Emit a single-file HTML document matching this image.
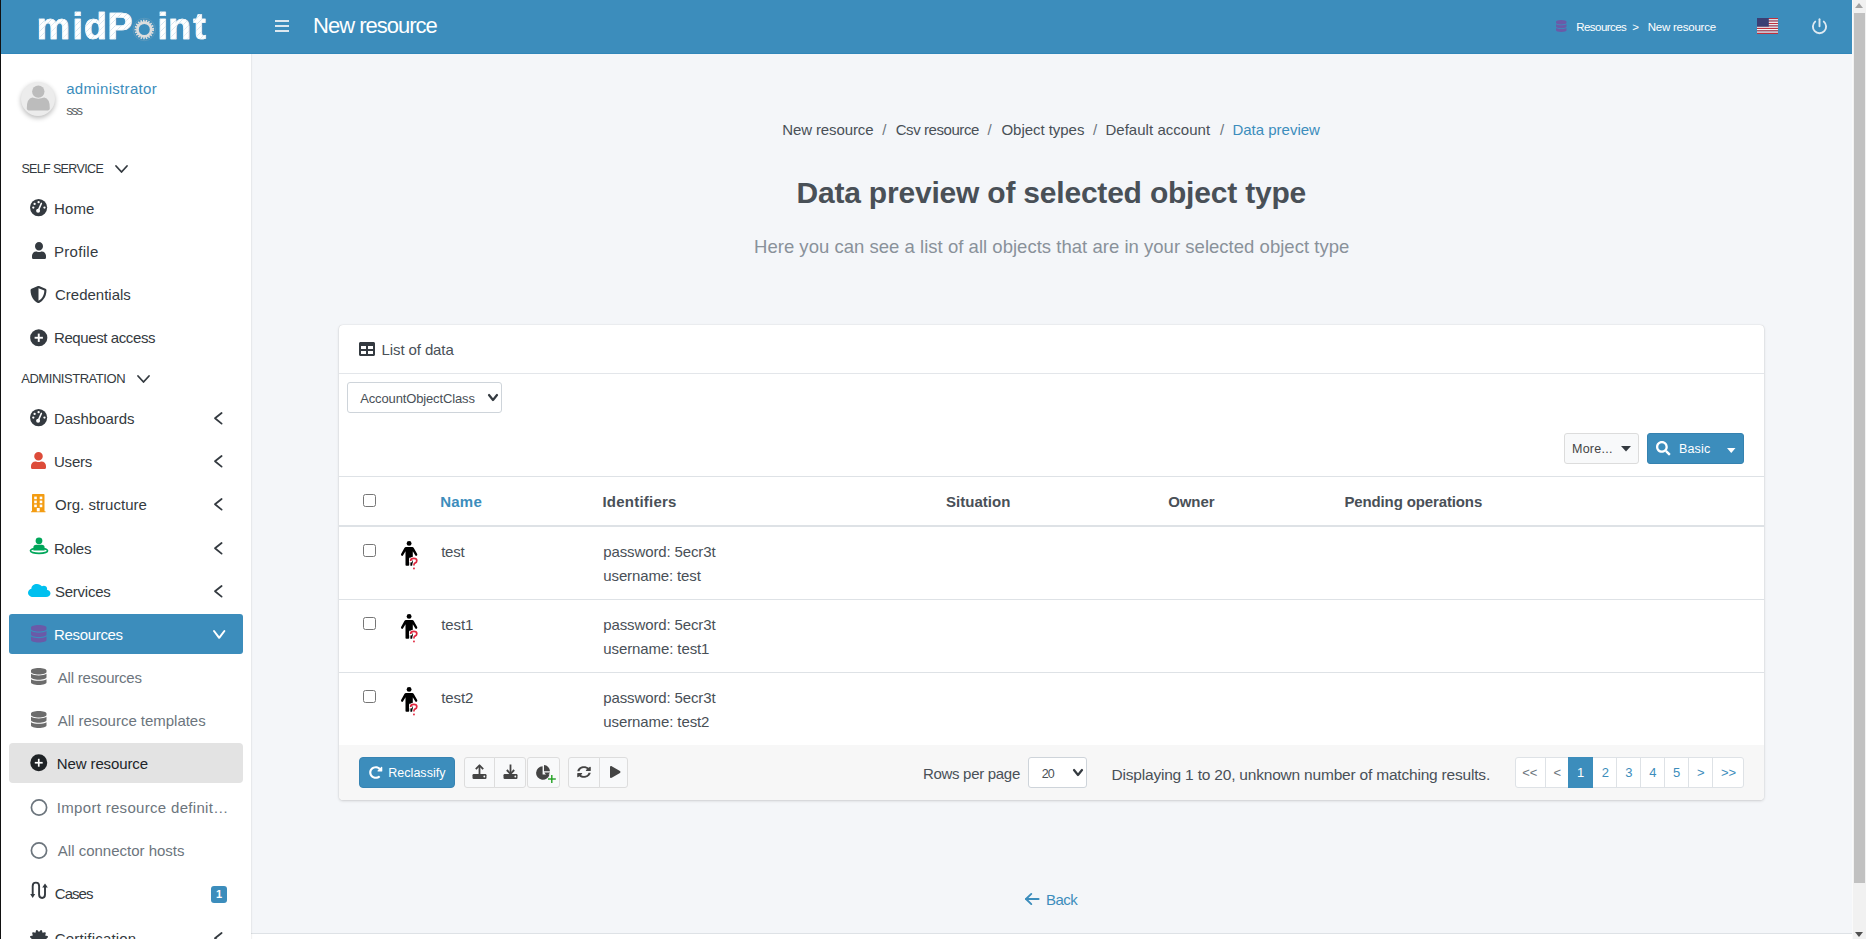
<!DOCTYPE html>
<html><head><meta charset="utf-8"><title>midPoint</title>
<style>
*{box-sizing:border-box;margin:0;padding:0}
html,body{width:1866px;height:939px;overflow:hidden}
body{position:relative;font-family:"Liberation Sans",sans-serif;background:#f4f6f9;color:#212529}
.b,.ic,.t{position:absolute}
.t{white-space:pre;line-height:normal}
.ic{display:block;overflow:visible}
</style></head><body>
<div class="b" style="left:251px;top:933px;width:1601px;height:1px;background:#dee2e6"></div>
<div class="b" style="left:251px;top:934px;width:1601px;height:5px;background:#fff"></div>
<div class="b" style="left:0px;top:54px;width:251px;height:885px;background:#fff;box-shadow:1px 0 1px rgba(0,0,0,.05)"></div>
<div class="b" style="left:0px;top:0px;width:1852px;height:54px;background:#3c8dbc;border-bottom:1px solid #3187ba"></div>
<div class="b" style="left:0px;top:0px;width:1px;height:939px;background:#111"></div>
<div class="b" style="left:275px;top:20px;width:14px;height:2px;background:#dce8f0"></div>
<div class="b" style="left:275px;top:25px;width:14px;height:2px;background:#dce8f0"></div>
<div class="b" style="left:275px;top:30px;width:14px;height:2px;background:#dce8f0"></div>
<svg class="ic" style="left:1556px;top:20px;width:10.5px;height:12px" viewBox="0 0 448 512" preserveAspectRatio="none"><path d="M448 73.143v45.714C448 159.143 347.667 192 224 192S0 159.143 0 118.857V73.143C0 32.857 100.333 0 224 0s224 32.857 224 73.143zM448 176v102.857C448 319.143 347.667 352 224 352S0 319.143 0 278.857V176c48.125 33.143 136.208 48.572 224 48.572S399.874 209.143 448 176zm0 160v102.857C448 479.143 347.667 512 224 512S0 479.143 0 438.857V336c48.125 33.143 136.208 48.572 224 48.572S399.874 369.143 448 336z" fill="#6a5aa8"/></svg>
<svg class="ic" style="left:1757px;top:18px;width:21px;height:16px" viewBox="0 0 21 16"><rect x="0" y="0.000" width="21" height="1.251" fill="#c0303c"/><rect x="0" y="1.231" width="21" height="1.251" fill="#ffffff"/><rect x="0" y="2.462" width="21" height="1.251" fill="#c0303c"/><rect x="0" y="3.692" width="21" height="1.251" fill="#ffffff"/><rect x="0" y="4.923" width="21" height="1.251" fill="#c0303c"/><rect x="0" y="6.154" width="21" height="1.251" fill="#ffffff"/><rect x="0" y="7.385" width="21" height="1.251" fill="#c0303c"/><rect x="0" y="8.615" width="21" height="1.251" fill="#ffffff"/><rect x="0" y="9.846" width="21" height="1.251" fill="#c0303c"/><rect x="0" y="11.077" width="21" height="1.251" fill="#ffffff"/><rect x="0" y="12.308" width="21" height="1.251" fill="#c0303c"/><rect x="0" y="13.538" width="21" height="1.251" fill="#ffffff"/><rect x="0" y="14.769" width="21" height="1.251" fill="#c0303c"/><rect x="0" y="0" width="11.8" height="8.6" fill="#3b3f74"/></svg>
<svg class="ic" style="left:1810px;top:17px;width:19px;height:19px" viewBox="0 0 19 19"><path d="M5.2 4.6 A6.6 6.6 0 1 0 13.8 4.6" fill="none" stroke="#dfeaf2" stroke-width="1.9" stroke-linecap="round"/><line x1="9.5" y1="2.2" x2="9.5" y2="9.2" stroke="#dfeaf2" stroke-width="1.9" stroke-linecap="round"/></svg>
<svg class="ic" style="left:132px;top:17px;width:25px;height:25px" viewBox="0 0 25 25"><circle cx="12.3" cy="12.5" r="11.2" fill="none" stroke="#8aa9bd" stroke-width="0.5" opacity="0.7"/><circle cx="12.3" cy="12.5" r="8.6" fill="none" stroke="#dcdcdc" stroke-width="2.4" stroke-dasharray="1.5 1.1"/><circle cx="12.3" cy="12.5" r="6.9" fill="none" stroke="#dddddd" stroke-width="2.8"/></svg>
<div class="b" style="left:21px;top:82px;width:34px;height:34px;border-radius:50%;background:#ececec;box-shadow:0 2px 5px rgba(0,0,0,.28)"></div>
<svg class="ic" style="left:21px;top:82px;width:34px;height:34px" viewBox="0 0 34 34"><circle cx="17.3" cy="9.6" r="6.2" fill="#bcbcbc"/><path d="M5.8 26.6 Q5.6 16.6 11.4 15.6 Q17.3 17.8 23.2 15.6 Q29 16.6 28.8 26.6 Q28.8 28.4 27 28.4 H7.6 Q5.8 28.4 5.8 26.6 Z" fill="#bcbcbc"/></svg>
<svg class="ic" style="left:114.5px;top:164.6px;width:13px;height:8px" viewBox="0 0 13 8"><polyline points="1,1 6.5,7 12,1" fill="none" stroke="#343a40" stroke-width="1.8" stroke-linecap="round" stroke-linejoin="round"/></svg>
<svg class="ic" style="left:136.5px;top:374.6px;width:13px;height:8px" viewBox="0 0 13 8"><polyline points="1,1 6.5,7 12,1" fill="none" stroke="#343a40" stroke-width="1.8" stroke-linecap="round" stroke-linejoin="round"/></svg>
<div class="b" style="left:9px;top:614px;width:234px;height:40px;background:#3c8dbc;border-radius:3px"></div>
<div class="b" style="left:9px;top:743px;width:234px;height:40px;background:#e3e3e3;border-radius:4px"></div>
<svg class="ic" style="left:29.9px;top:198.6px;width:17.2px;height:17.2px" viewBox="0 0 17.2 17.2"><circle cx="8.6" cy="8.6" r="8.6" fill="#343a40"/><circle cx="8.6" cy="3.1999999999999993" r="1.15" fill="#fff"/><circle cx="4.6" cy="4.8999999999999995" r="1.15" fill="#fff"/><circle cx="3.3" cy="8.6" r="1.15" fill="#fff"/><circle cx="14.5" cy="8.6" r="1.15" fill="#fff"/><line x1="8.2" y1="11.6" x2="11.4" y2="4.4" stroke="#fff" stroke-width="1.5" stroke-linecap="round"/><circle cx="8.1" cy="11.8" r="2" fill="#fff"/></svg>
<svg class="ic" style="left:32px;top:242px;width:14px;height:17px" viewBox="0 0 448 512" preserveAspectRatio="none"><path d="M224 256c70.7 0 128-57.3 128-128S294.7 0 224 0 96 57.3 96 128s57.3 128 128 128zm89.6 32h-16.7c-22.2 10.2-46.9 16-72.9 16s-50.6-5.8-72.9-16h-16.7C60.2 288 0 348.2 0 422.4V464c0 26.5 21.5 48 48 48h352c26.5 0 48-21.5 48-48v-41.6c0-74.2-60.2-134.4-134.4-134.4z" fill="#343a40"/></svg>
<svg class="ic" style="left:30px;top:286px;width:17px;height:17px" viewBox="0 0 512 512" preserveAspectRatio="none"><path d="M466.5 83.7l-192-80a48.15 48.15 0 0 0-36.9 0l-192 80C27.7 91.1 16 108.6 16 128c0 198.5 114.5 335.7 221.5 380.3 11.8 4.9 25.1 4.9 36.9 0C360.1 472.6 496 349.3 496 128c0-19.4-11.7-36.9-29.5-44.3zM256.1 446.3l-.1-381 175.9 73.3c-3.3 151.4-82.1 261.1-175.8 307.7z" fill="#343a40"/></svg>
<svg class="ic" style="left:30px;top:328.5px;width:17.5px;height:17.5px" viewBox="0 0 17.5 17.5"><circle cx="8.75" cy="8.75" r="8.6" fill="#343a40"/><line x1="8.75" y1="4.6" x2="8.75" y2="12.9" stroke="#fff" stroke-width="1.9"/><line x1="4.6" y1="8.75" x2="12.9" y2="8.75" stroke="#fff" stroke-width="1.9"/></svg>
<svg class="ic" style="left:29.9px;top:408.7px;width:17.2px;height:17.2px" viewBox="0 0 17.2 17.2"><circle cx="8.6" cy="8.6" r="8.6" fill="#343a40"/><circle cx="8.6" cy="3.1999999999999993" r="1.15" fill="#fff"/><circle cx="4.6" cy="4.8999999999999995" r="1.15" fill="#fff"/><circle cx="3.3" cy="8.6" r="1.15" fill="#fff"/><circle cx="14.5" cy="8.6" r="1.15" fill="#fff"/><line x1="8.2" y1="11.6" x2="11.4" y2="4.4" stroke="#fff" stroke-width="1.5" stroke-linecap="round"/><circle cx="8.1" cy="11.8" r="2" fill="#fff"/></svg>
<svg class="ic" style="left:31px;top:452px;width:15px;height:17px" viewBox="0 0 448 512" preserveAspectRatio="none"><path d="M224 256c70.7 0 128-57.3 128-128S294.7 0 224 0 96 57.3 96 128s57.3 128 128 128zm89.6 32h-16.7c-22.2 10.2-46.9 16-72.9 16s-50.6-5.8-72.9-16h-16.7C60.2 288 0 348.2 0 422.4V464c0 26.5 21.5 48 48 48h352c26.5 0 48-21.5 48-48v-41.6c0-74.2-60.2-134.4-134.4-134.4z" fill="#dd4b39"/></svg>
<svg class="ic" style="left:31px;top:494px;width:14.5px;height:18.2px" viewBox="0 0 14.5 18.2"><path d="M1 0.8 Q1 0 1.8 0 H12.7 Q13.5 0 13.5 0.8 V17.2 H14.5 V18.2 H0 V17.2 H1 Z" fill="#f39c12"/><rect x="3.2" y="2.6" width="2.6" height="2.6" fill="#fff"/><rect x="8.7" y="2.6" width="2.6" height="2.6" fill="#fff"/><rect x="3.2" y="6.6" width="2.6" height="2.6" fill="#fff"/><rect x="8.7" y="6.6" width="2.6" height="2.6" fill="#fff"/><rect x="3.2" y="10.6" width="2.6" height="2.6" fill="#fff"/><rect x="8.7" y="10.6" width="2.6" height="2.6" fill="#fff"/><rect x="5.8" y="14" width="2.9" height="3.4" fill="#fff"/></svg>
<svg class="ic" style="left:28.5px;top:536px;width:20px;height:19px" viewBox="0 0 20 19"><ellipse cx="10" cy="14.8" rx="8.6" ry="2.6" fill="none" stroke="#00a65a" stroke-width="1.6"/><circle cx="10" cy="4.8" r="3.4" fill="#00a65a"/><path d="M4.4 14.6 V11.6 Q4.4 8.8 7.2 8.8 H12.8 Q15.6 8.8 15.6 11.6 V14.6 Z" fill="#00a65a"/></svg>
<svg class="ic" style="left:27.5px;top:583px;width:22.5px;height:15px" viewBox="0 0 640 512" preserveAspectRatio="none"><path d="M537.6 226.6c4.1-10.7 6.4-22.4 6.4-34.6 0-53-43-96-96-96-19.7 0-38.1 6-53.3 16.2C367 64.2 315.3 32 256 32c-88.4 0-160 71.6-160 160 0 2.7.1 5.4.2 8.1C40.2 219.8 0 273.2 0 336c0 79.5 64.5 144 144 144h368c70.7 0 128-57.3 128-128 0-61.9-44-113.6-102.4-125.4z" fill="#00c0ef"/></svg>
<svg class="ic" style="left:31px;top:624.5px;width:15.5px;height:17.5px" viewBox="0 0 448 512" preserveAspectRatio="none"><path d="M448 73.143v45.714C448 159.143 347.667 192 224 192S0 159.143 0 118.857V73.143C0 32.857 100.333 0 224 0s224 32.857 224 73.143zM448 176v102.857C448 319.143 347.667 352 224 352S0 319.143 0 278.857V176c48.125 33.143 136.208 48.572 224 48.572S399.874 209.143 448 176zm0 160v102.857C448 479.143 347.667 512 224 512S0 479.143 0 438.857V336c48.125 33.143 136.208 48.572 224 48.572S399.874 369.143 448 336z" fill="#6a5aa8"/></svg>
<svg class="ic" style="left:31px;top:668px;width:15.5px;height:17px" viewBox="0 0 448 512" preserveAspectRatio="none"><path d="M448 73.143v45.714C448 159.143 347.667 192 224 192S0 159.143 0 118.857V73.143C0 32.857 100.333 0 224 0s224 32.857 224 73.143zM448 176v102.857C448 319.143 347.667 352 224 352S0 319.143 0 278.857V176c48.125 33.143 136.208 48.572 224 48.572S399.874 209.143 448 176zm0 160v102.857C448 479.143 347.667 512 224 512S0 479.143 0 438.857V336c48.125 33.143 136.208 48.572 224 48.572S399.874 369.143 448 336z" fill="#6c6c6c"/></svg>
<svg class="ic" style="left:31px;top:711px;width:15.5px;height:17px" viewBox="0 0 448 512" preserveAspectRatio="none"><path d="M448 73.143v45.714C448 159.143 347.667 192 224 192S0 159.143 0 118.857V73.143C0 32.857 100.333 0 224 0s224 32.857 224 73.143zM448 176v102.857C448 319.143 347.667 352 224 352S0 319.143 0 278.857V176c48.125 33.143 136.208 48.572 224 48.572S399.874 209.143 448 176zm0 160v102.857C448 479.143 347.667 512 224 512S0 479.143 0 438.857V336c48.125 33.143 136.208 48.572 224 48.572S399.874 369.143 448 336z" fill="#6c6c6c"/></svg>
<svg class="ic" style="left:30px;top:754.2px;width:17.5px;height:17.5px" viewBox="0 0 17.5 17.5"><circle cx="8.75" cy="8.75" r="8.5" fill="#1f2326"/><line x1="8.75" y1="4.8" x2="8.75" y2="12.7" stroke="#fff" stroke-width="1.7"/><line x1="4.8" y1="8.75" x2="12.7" y2="8.75" stroke="#fff" stroke-width="1.7"/></svg>
<svg class="ic" style="left:30px;top:798.5px;width:18px;height:17px" viewBox="0 0 18 17"><circle cx="9" cy="8.5" r="7.6" fill="none" stroke="#6c757d" stroke-width="1.7"/></svg>
<svg class="ic" style="left:30px;top:841.5px;width:18px;height:17px" viewBox="0 0 18 17"><circle cx="9" cy="8.5" r="7.6" fill="none" stroke="#6c757d" stroke-width="1.7"/></svg>
<svg class="ic" style="left:29px;top:881px;width:20px;height:19px" viewBox="0 0 20 19"><path d="M3.7 15 V5 Q3.7 1.6 6.9 1.6 Q10.1 1.6 10.1 5 V13.6 Q10.1 17 13.1 17 Q16 17 16 13.6 V5.5" fill="none" stroke="#343a40" stroke-width="1.9"/><path d="M1.2 13 L3.7 17 L6.2 13 Z" fill="#343a40"/><path d="M13.2 6.6 L16 2.4 L18.8 6.6 Z" fill="#343a40"/></svg>
<div class="b" style="left:211px;top:885.5px;width:16px;height:17px;background:#3c8dbc;border-radius:3px"></div>
<svg class="ic" style="left:30px;top:929.5px;width:18px;height:18px" viewBox="0 0 512 512" preserveAspectRatio="none"><path d="M458.622 255.92l45.985-45.005c13.708-12.977 7.316-36.039-10.664-40.339l-62.650-15.990 17.661-62.015c4.991-17.838-11.829-34.663-29.661-29.671l-61.994 17.667-15.984-62.671C337.085.197 313.765-6.276 300.895 7.298L256 53.823 211.105 7.298c-12.725-13.421-36.179-7.270-40.410 10.367l-15.984 62.671-61.994-17.667C74.870 57.680 58.056 74.501 63.046 92.340l17.661 62.015-62.650 15.990C.069 174.656-6.310 197.723 7.392 210.693l45.985 45.005-45.985 45.005c-13.708 12.977-7.316 36.039 10.664 40.339l62.650 15.990-17.661 62.015c-4.991 17.838 11.829 34.663 29.661 29.671l61.994-17.667 15.984 62.671c4.439 18.438 27.737 24.360 40.410 10.367L256 458.237l44.895 46.006c12.590 13.531 35.870 7.531 40.410-10.367l15.984-62.671 61.994 17.667c17.832 4.991 34.652-11.830 29.661-29.671l-17.661-62.015 62.650-15.990c17.980-4.300 24.376-27.363 10.664-40.339l-45.975-45.005z" fill="#343a40"/></svg>
<svg class="ic" style="left:214.2px;top:411.6px;width:8.6px;height:12.6px" viewBox="0 0 8.6 12.6"><polyline points="7.6,1 1,6.3 7.6,11.6" fill="none" stroke="#343a40" stroke-width="1.8" stroke-linecap="round" stroke-linejoin="round"/></svg>
<svg class="ic" style="left:214.2px;top:454.9px;width:8.6px;height:12.6px" viewBox="0 0 8.6 12.6"><polyline points="7.6,1 1,6.3 7.6,11.6" fill="none" stroke="#343a40" stroke-width="1.8" stroke-linecap="round" stroke-linejoin="round"/></svg>
<svg class="ic" style="left:214.2px;top:498.2px;width:8.6px;height:12.6px" viewBox="0 0 8.6 12.6"><polyline points="7.6,1 1,6.3 7.6,11.6" fill="none" stroke="#343a40" stroke-width="1.8" stroke-linecap="round" stroke-linejoin="round"/></svg>
<svg class="ic" style="left:214.2px;top:541.5px;width:8.6px;height:12.6px" viewBox="0 0 8.6 12.6"><polyline points="7.6,1 1,6.3 7.6,11.6" fill="none" stroke="#343a40" stroke-width="1.8" stroke-linecap="round" stroke-linejoin="round"/></svg>
<svg class="ic" style="left:214.2px;top:584.8px;width:8.6px;height:12.6px" viewBox="0 0 8.6 12.6"><polyline points="7.6,1 1,6.3 7.6,11.6" fill="none" stroke="#343a40" stroke-width="1.8" stroke-linecap="round" stroke-linejoin="round"/></svg>
<svg class="ic" style="left:214.2px;top:932px;width:8.6px;height:12.6px" viewBox="0 0 8.6 12.6"><polyline points="7.6,1 1,6.3 7.6,11.6" fill="none" stroke="#343a40" stroke-width="1.8" stroke-linecap="round" stroke-linejoin="round"/></svg>
<svg class="ic" style="left:212.8px;top:629.6px;width:12.4px;height:8.8px" viewBox="0 0 12.4 8.8"><polyline points="1,1 6.2,7.800000000000001 11.4,1" fill="none" stroke="#fff" stroke-width="2" stroke-linecap="round" stroke-linejoin="round"/></svg>
<div class="b" style="left:339px;top:325px;width:1425px;height:475px;background:#fff;border-radius:4px;box-shadow:0 0 1px rgba(0,0,0,.2),0 1px 3px rgba(0,0,0,.15)"></div>
<div class="b" style="left:339px;top:373px;width:1425px;height:1px;background:#e3e6ea"></div>
<svg class="ic" style="left:359px;top:342px;width:16px;height:14px" viewBox="0 32 512 448" preserveAspectRatio="none"><path d="M464 32H48C21.49 32 0 53.49 0 80v352c0 26.51 21.49 48 48 48h416c26.51 0 48-21.49 48-48V80c0-26.51-21.490-48-48-48zM224 416H64v-96h160v96zm0-160H64v-96h160v96zm224 160H288v-96h160v96zm0-160H288v-96h160v96z" fill="#343a40"/></svg>
<div class="b" style="left:347px;top:382px;width:155px;height:31px;border:1px solid #ced4da;border-radius:3px;background:#fff"></div>
<svg class="ic" style="left:488px;top:394px;width:10px;height:7px" viewBox="0 0 10 7"><polyline points="1,1 5.0,6 9,1" fill="none" stroke="#343a40" stroke-width="2.2" stroke-linecap="round" stroke-linejoin="round"/></svg>
<div class="b" style="left:1564px;top:433px;width:74.5px;height:30.5px;border:1px solid #dcdcdc;border-radius:3px;background:#f8f9fa"></div>
<svg class="ic" style="left:1620.5px;top:446px;width:10px;height:5.5px" viewBox="0 0 10 5.5"><path d="M0 0 H10 L5 5.5 Z" fill="#343a40"/></svg>
<div class="b" style="left:1647px;top:433px;width:96.5px;height:30.5px;background:#3c8dbc;border-radius:3px;border:1px solid #3582b0"></div>
<svg class="ic" style="left:1655.5px;top:441px;width:14.5px;height:14.5px" viewBox="0 0 512 512" preserveAspectRatio="none"><path d="M505 442.7L405.3 343c-4.5-4.5-10.600-7-17-7H372c27.6-35.3 44-79.7 44-128C416 93.1 322.9 0 208 0S0 93.1 0 208s93.1 208 208 208c48.3 0 92.7-16.4 128-44v16.3c0 6.4 2.5 12.5 7 17l99.7 99.7c9.4 9.4 24.6 9.4 33.9 0l28.3-28.3c9.4-9.4 9.4-24.6.1-34zM208 336c-70.7 0-128-57.2-128-128 0-70.7 57.2-128 128-128 70.7 0 128 57.2 128 128 0 70.7-57.2 128-128 128z" fill="#fff"/></svg>
<svg class="ic" style="left:1727px;top:447.5px;width:8.5px;height:5px" viewBox="0 0 8.5 5"><path d="M0 0 H8.5 L4.25 5 Z" fill="#fff"/></svg>
<div class="b" style="left:339px;top:476px;width:1425px;height:1px;background:#dee2e6"></div>
<div class="b" style="left:339px;top:525px;width:1425px;height:2px;background:#dee2e6"></div>
<div class="b" style="left:339px;top:599px;width:1425px;height:1px;background:#dee2e6"></div>
<div class="b" style="left:339px;top:672px;width:1425px;height:1px;background:#dee2e6"></div>
<div class="b" style="left:363px;top:494px;width:13px;height:13px;border:1px solid #767676;border-radius:2.5px;background:#fff"></div>
<div class="b" style="left:363px;top:544px;width:13px;height:13px;border:1px solid #767676;border-radius:2.5px;background:#fff"></div>
<div class="b" style="left:363px;top:617px;width:13px;height:13px;border:1px solid #767676;border-radius:2.5px;background:#fff"></div>
<div class="b" style="left:363px;top:690px;width:13px;height:13px;border:1px solid #767676;border-radius:2.5px;background:#fff"></div>
<svg class="ic" style="left:400.5px;top:541px;width:17px;height:29px" viewBox="0 0 17 29"><circle cx="8.1" cy="2.4" r="2.45" fill="#000"/><path d="M5 6.1 H11.2 Q12.2 6.1 12.8 7 L16.2 13 Q16.7 14.3 15.6 14.8 Q14.7 15.1 14.2 14.2 L11.8 10.2 V24 Q11.8 24.8 11 24.8 H9.4 V16.8 H8.2 V24.1 Q8.2 24.8 7.4 24.8 H5.3 Q4.5 24.8 4.5 24 V10.2 L2.1 14.2 Q1.6 15.1 0.7 14.8 Q-0.4 14.3 0.1 13 L3.4 7 Q4 6.1 5 6.1 Z" fill="#000"/><path d="M9.6 19.9 Q9.6 17.4 12.7 17.4 Q15.8 17.4 15.8 19.7 Q15.8 21.3 13.9 22.1 Q12.9 22.6 12.9 24.4" fill="none" stroke="#fff" stroke-width="3.4" stroke-linecap="round"/><path d="M9.6 19.9 Q9.6 17.4 12.7 17.4 Q15.8 17.4 15.8 19.7 Q15.8 21.3 13.9 22.1 Q12.9 22.6 12.9 24.4" fill="none" stroke="#e0283f" stroke-width="1.7"/><rect x="12.1" y="26.6" width="1.7" height="1.7" fill="#e0283f"/></svg>
<svg class="ic" style="left:400.5px;top:614px;width:17px;height:29px" viewBox="0 0 17 29"><circle cx="8.1" cy="2.4" r="2.45" fill="#000"/><path d="M5 6.1 H11.2 Q12.2 6.1 12.8 7 L16.2 13 Q16.7 14.3 15.6 14.8 Q14.7 15.1 14.2 14.2 L11.8 10.2 V24 Q11.8 24.8 11 24.8 H9.4 V16.8 H8.2 V24.1 Q8.2 24.8 7.4 24.8 H5.3 Q4.5 24.8 4.5 24 V10.2 L2.1 14.2 Q1.6 15.1 0.7 14.8 Q-0.4 14.3 0.1 13 L3.4 7 Q4 6.1 5 6.1 Z" fill="#000"/><path d="M9.6 19.9 Q9.6 17.4 12.7 17.4 Q15.8 17.4 15.8 19.7 Q15.8 21.3 13.9 22.1 Q12.9 22.6 12.9 24.4" fill="none" stroke="#fff" stroke-width="3.4" stroke-linecap="round"/><path d="M9.6 19.9 Q9.6 17.4 12.7 17.4 Q15.8 17.4 15.8 19.7 Q15.8 21.3 13.9 22.1 Q12.9 22.6 12.9 24.4" fill="none" stroke="#e0283f" stroke-width="1.7"/><rect x="12.1" y="26.6" width="1.7" height="1.7" fill="#e0283f"/></svg>
<svg class="ic" style="left:400.5px;top:687px;width:17px;height:29px" viewBox="0 0 17 29"><circle cx="8.1" cy="2.4" r="2.45" fill="#000"/><path d="M5 6.1 H11.2 Q12.2 6.1 12.8 7 L16.2 13 Q16.7 14.3 15.6 14.8 Q14.7 15.1 14.2 14.2 L11.8 10.2 V24 Q11.8 24.8 11 24.8 H9.4 V16.8 H8.2 V24.1 Q8.2 24.8 7.4 24.8 H5.3 Q4.5 24.8 4.5 24 V10.2 L2.1 14.2 Q1.6 15.1 0.7 14.8 Q-0.4 14.3 0.1 13 L3.4 7 Q4 6.1 5 6.1 Z" fill="#000"/><path d="M9.6 19.9 Q9.6 17.4 12.7 17.4 Q15.8 17.4 15.8 19.7 Q15.8 21.3 13.9 22.1 Q12.9 22.6 12.9 24.4" fill="none" stroke="#fff" stroke-width="3.4" stroke-linecap="round"/><path d="M9.6 19.9 Q9.6 17.4 12.7 17.4 Q15.8 17.4 15.8 19.7 Q15.8 21.3 13.9 22.1 Q12.9 22.6 12.9 24.4" fill="none" stroke="#e0283f" stroke-width="1.7"/><rect x="12.1" y="26.6" width="1.7" height="1.7" fill="#e0283f"/></svg>
<div class="b" style="left:339px;top:745px;width:1425px;height:55px;background:#f7f7f7;border-radius:0 0 4px 4px"></div>
<div class="b" style="left:359px;top:757px;width:96px;height:31px;background:#3c8dbc;border:1px solid #3784b3;border-radius:4px"></div>
<svg class="ic" style="left:368.5px;top:765.5px;width:13.5px;height:13px" viewBox="0 0 512 512" preserveAspectRatio="none"><path d="M256.455 8c66.269.119 126.437 26.233 170.859 68.685l35.715-35.715C478.149 25.851 504 36.559 504 57.941V192c0 13.255-10.745 24-24 24H345.941c-21.382 0-32.090-25.851-16.971-40.971l41.750-41.750c-30.864-28.899-70.801-44.907-113.230-45.273-92.398-.798-170.283 73.977-169.484 169.442C88.764 348.009 162.184 424 256 424c41.127 0 79.997-14.678 110.629-41.556 4.743-4.161 11.906-3.908 16.368.553l39.662 39.662c4.872 4.872 4.631 12.815-.482 17.433C378.202 479.813 319.926 504 256 504 119.034 504 8.001 392.967 8 256.002 7.999 119.193 119.646 7.755 256.455 8z" fill="#fff"/></svg>
<div class="b" style="left:463.5px;top:757px;width:31px;height:31px;background:#f8f9fa;border:1px solid #dddddd;border-radius:3px 0 0 3px"></div>
<div class="b" style="left:494px;top:757px;width:31.5px;height:31px;background:#f8f9fa;border:1px solid #dddddd;border-radius:0 3px 3px 0"></div>
<div class="b" style="left:526.5px;top:757px;width:33px;height:31px;background:#f8f9fa;border:1px solid #dddddd;border-radius:3px"></div>
<div class="b" style="left:568px;top:757px;width:31.5px;height:31px;background:#f8f9fa;border:1px solid #dddddd;border-radius:3px 0 0 3px"></div>
<div class="b" style="left:599px;top:757px;width:28.5px;height:31px;background:#f8f9fa;border:1px solid #dddddd;border-radius:0 3px 3px 0"></div>
<svg class="ic" style="left:471.5px;top:764px;width:15px;height:15px" viewBox="0 0 15 15"><rect x="0.5" y="10" width="14" height="5" rx="1.2" fill="#444"/><circle cx="12.3" cy="12.5" r="0.9" fill="#f8f9fa"/><line x1="7.5" y1="1.6" x2="7.5" y2="11" stroke="#444" stroke-width="1.8"/><polyline points="3.8,5.2 7.5,1.3 11.2,5.2" fill="none" stroke="#444" stroke-width="1.8" stroke-linejoin="round"/></svg>
<svg class="ic" style="left:502.5px;top:764px;width:15px;height:15px" viewBox="0 0 15 15"><rect x="0.5" y="10" width="14" height="5" rx="1.2" fill="#444"/><circle cx="12.3" cy="12.5" r="0.9" fill="#f8f9fa"/><line x1="7.5" y1="0.5" x2="7.5" y2="9.6" stroke="#444" stroke-width="1.8"/><polyline points="3.8,6 7.5,9.8 11.2,6" fill="none" stroke="#444" stroke-width="1.8" stroke-linejoin="round"/></svg>
<svg class="ic" style="left:536px;top:765px;width:20px;height:19px" viewBox="0 0 20 19"><path d="M6.6 1.2 A6.8 6.8 0 1 0 13.5 9.5 H6.6 Z" fill="#444"/><path d="M8 0 A6.6 6.6 0 0 1 14 6.3 H8 Z" fill="#444"/><path d="M8.3 7.6 H14 L11.4 11.6 Z" fill="#444"/><line x1="15.8" y1="10" x2="15.8" y2="18" stroke="#20a020" stroke-width="1.4"/><line x1="12" y1="14" x2="19.8" y2="14" stroke="#20a020" stroke-width="1.4"/></svg>
<svg class="ic" style="left:577px;top:766px;width:14px;height:12px" viewBox="0 0 512 512" preserveAspectRatio="none"><path d="M370.72 133.28C339.458 104.008 298.888 87.962 255.848 88c-77.458.068-144.328 53.178-162.791 126.850-1.344 5.363-6.122 9.150-11.651 9.150H24.103c-7.498 0-13.194-6.807-11.807-14.176C33.933 94.924 134.813 8 256 8c66.448 0 126.791 26.136 171.315 68.685L463.030 40.970C478.149 25.851 504 36.559 504 57.941V192c0 13.255-10.745 24-24 24H345.941c-21.382 0-32.090-25.851-16.971-40.971l41.750-41.749zM32 296h134.059c21.382 0 32.090 25.851 16.971 40.971l-41.750 41.750c31.262 29.273 71.835 45.319 114.876 45.280 77.418-.070 144.315-53.144 162.787-126.849 1.344-5.363 6.122-9.150 11.651-9.150h57.304c7.498 0 13.194 6.807 11.807 14.176C478.067 417.076 377.187 504 256 504c-66.448 0-126.791-26.136-171.315-68.685L48.970 471.030C33.851 486.149 8 475.441 8 454.059V320c0-13.255 10.745-24 24-24z" fill="#444"/></svg>
<svg class="ic" style="left:609.5px;top:766px;width:10.5px;height:12px" viewBox="0 0 448 512" preserveAspectRatio="none"><path d="M424.4 214.7L72.4 6.6C43.8-10.3 0 6.1 0 47.9V464c0 37.5 40.7 60.1 72.4 41.3l352-208c31.400-18.5 31.500-64.1 0-82.6z" fill="#444"/></svg>
<div class="b" style="left:1028px;top:757px;width:58.5px;height:30.5px;border:1px solid #ced4da;border-radius:3px;background:#fff"></div>
<svg class="ic" style="left:1073px;top:769px;width:10px;height:7px" viewBox="0 0 10 7"><polyline points="1,1 5.0,6 9,1" fill="none" stroke="#343a40" stroke-width="2.2" stroke-linecap="round" stroke-linejoin="round"/></svg>
<div class="b" style="left:1514.5px;top:757px;width:229px;height:30.5px;border:1px solid #dee2e6;border-radius:3px;background:#fff"></div>
<div class="b" style="left:1545px;top:757px;width:1px;height:30.5px;background:#dee2e6"></div>
<div class="b" style="left:1616px;top:757px;width:1px;height:30.5px;background:#dee2e6"></div>
<div class="b" style="left:1640px;top:757px;width:1px;height:30.5px;background:#dee2e6"></div>
<div class="b" style="left:1664px;top:757px;width:1px;height:30.5px;background:#dee2e6"></div>
<div class="b" style="left:1688px;top:757px;width:1px;height:30.5px;background:#dee2e6"></div>
<div class="b" style="left:1712px;top:757px;width:1px;height:30.5px;background:#dee2e6"></div>
<div class="b" style="left:1568px;top:757px;width:25px;height:30.5px;background:#3c8dbc"></div>
<svg class="ic" style="left:1023.5px;top:892px;width:16px;height:14px" viewBox="0 0 16 14"><line x1="2" y1="7" x2="14.6" y2="7" stroke="#3c8dbc" stroke-width="1.9" stroke-linecap="round"/><polyline points="7.3,1.9 2,7 7.3,12.1" fill="none" stroke="#3c8dbc" stroke-width="1.9" stroke-linecap="round" stroke-linejoin="round"/></svg>
<div class="b" style="left:1852px;top:0px;width:14px;height:939px;background:#f1f1f1;border-left:1px solid #fafafa"></div>
<div class="b" style="left:1854px;top:13px;width:11px;height:870px;background:#c1c1c1"></div>
<svg class="ic" style="left:1855px;top:3px;width:8px;height:5px" viewBox="0 0 8 5"><path d="M0 5 L4 0 L8 5 Z" fill="#a3a3a3"/></svg>
<svg class="ic" style="left:1855px;top:932px;width:8px;height:5px" viewBox="0 0 8 5"><path d="M0 0 L4 5 L8 0 Z" fill="#505050"/></svg>
<span class="t" style="left:313.00px;top:13.00px;font-size:22px;color:#fff;letter-spacing:-0.998px;">New resource</span>
<span class="t" style="left:1576.30px;top:21.00px;font-size:11.5px;color:#fff;letter-spacing:-0.565px;">Resources</span>
<span class="t" style="left:1632.30px;top:21.00px;font-size:11.5px;color:#fff;">></span>
<span class="t" style="left:1647.70px;top:21.00px;font-size:11.5px;color:#fff;letter-spacing:-0.232px;">New resource</span>
<span class="t" style="left:66.20px;top:80.00px;font-size:15px;color:#3c8dbc;letter-spacing:0.317px;">administrator</span>
<span class="t" style="left:66.20px;top:103.00px;font-size:13.5px;color:#5a5f64;letter-spacing:-1.750px;">sss</span>
<span class="t" style="left:21.40px;top:162.00px;font-size:12.5px;color:#343a40;letter-spacing:-0.641px;">SELF SERVICE</span>
<span class="t" style="left:21.20px;top:371.00px;font-size:13px;color:#343a40;letter-spacing:-0.452px;">ADMINISTRATION</span>
<span class="t" style="left:54.00px;top:200.00px;font-size:15px;color:#343a40;letter-spacing:0.110px;">Home</span>
<span class="t" style="left:54.00px;top:243.00px;font-size:15px;color:#343a40;letter-spacing:0.304px;">Profile</span>
<span class="t" style="left:55.00px;top:286.00px;font-size:15px;color:#343a40;">Credentials</span>
<span class="t" style="left:54.00px;top:329.00px;font-size:15px;color:#343a40;letter-spacing:-0.402px;">Request access</span>
<span class="t" style="left:54.00px;top:410.00px;font-size:15px;color:#343a40;letter-spacing:-0.042px;">Dashboards</span>
<span class="t" style="left:54.00px;top:453.00px;font-size:15px;color:#343a40;letter-spacing:-0.217px;">Users</span>
<span class="t" style="left:55.00px;top:496.00px;font-size:15px;color:#343a40;letter-spacing:0.012px;">Org. structure</span>
<span class="t" style="left:54.00px;top:540.00px;font-size:15px;color:#343a40;letter-spacing:-0.212px;">Roles</span>
<span class="t" style="left:55.00px;top:583.00px;font-size:15px;color:#343a40;letter-spacing:-0.245px;">Services</span>
<span class="t" style="left:54.00px;top:626.00px;font-size:15px;color:#fff;letter-spacing:-0.325px;">Resources</span>
<span class="t" style="left:54.80px;top:885.00px;font-size:15px;color:#343a40;letter-spacing:-0.979px;">Cases</span>
<span class="t" style="left:54.80px;top:930.00px;font-size:15px;color:#343a40;letter-spacing:0.179px;">Certification</span>
<span class="t" style="left:57.80px;top:669.00px;font-size:15px;color:#6c757d;letter-spacing:-0.208px;">All resources</span>
<span class="t" style="left:57.80px;top:712.00px;font-size:15px;color:#6c757d;letter-spacing:-0.024px;">All resource templates</span>
<span class="t" style="left:56.80px;top:755.00px;font-size:15px;color:#212529;letter-spacing:-0.117px;">New resource</span>
<span class="t" style="left:56.80px;top:799.00px;font-size:15px;color:#6c757d;letter-spacing:0.312px;">Import resource definit…</span>
<span class="t" style="left:57.80px;top:842.00px;font-size:15px;color:#6c757d;">All connector hosts</span>
<span class="t" style="left:216.00px;top:888.00px;font-size:11px;color:#fff;font-weight:700;">1</span>
<span class="t" style="left:782.20px;top:121.00px;font-size:15px;color:#495057;letter-spacing:-0.108px;">New resource</span>
<span class="t" style="left:882.20px;top:121.00px;font-size:15px;color:#6c757d;">/</span>
<span class="t" style="left:895.70px;top:121.00px;font-size:15px;color:#495057;letter-spacing:-0.429px;">Csv resource</span>
<span class="t" style="left:987.60px;top:121.00px;font-size:15px;color:#6c757d;">/</span>
<span class="t" style="left:1001.50px;top:121.00px;font-size:15px;color:#495057;letter-spacing:-0.043px;">Object types</span>
<span class="t" style="left:1093.00px;top:121.00px;font-size:15px;color:#6c757d;">/</span>
<span class="t" style="left:1105.40px;top:121.00px;font-size:15px;color:#495057;letter-spacing:0.038px;">Default account</span>
<span class="t" style="left:1220.00px;top:121.00px;font-size:15px;color:#6c757d;">/</span>
<span class="t" style="left:1232.40px;top:121.00px;font-size:15px;color:#3c8dbc;">Data preview</span>
<span class="t" style="left:796.50px;top:176.00px;font-size:30px;color:#495057;font-weight:700;letter-spacing:-0.204px;">Data preview of selected object type</span>
<span class="t" style="left:754.00px;top:236.00px;font-size:18.5px;color:#89919a;letter-spacing:0.026px;">Here you can see a list of all objects that are in your selected object type</span>
<span class="t" style="left:381.60px;top:341.00px;font-size:15px;color:#495057;letter-spacing:-0.113px;">List of data</span>
<span class="t" style="left:360.20px;top:391.00px;font-size:13px;color:#495057;letter-spacing:-0.138px;">AccountObjectClass</span>
<span class="t" style="left:1572.00px;top:442.00px;font-size:12.5px;color:#444;letter-spacing:0.246px;">More...</span>
<span class="t" style="left:1679.00px;top:442.00px;font-size:12.5px;color:#fff;letter-spacing:0.146px;">Basic</span>
<span class="t" style="left:440.30px;top:493.00px;font-size:15px;color:#3c8dbc;font-weight:700;letter-spacing:0.196px;">Name</span>
<span class="t" style="left:602.40px;top:493.00px;font-size:15px;color:#495057;font-weight:700;letter-spacing:0.236px;">Identifiers</span>
<span class="t" style="left:945.90px;top:493.00px;font-size:15px;color:#495057;font-weight:700;letter-spacing:0.050px;">Situation</span>
<span class="t" style="left:1168.20px;top:493.00px;font-size:15px;color:#495057;font-weight:700;letter-spacing:-0.085px;">Owner</span>
<span class="t" style="left:1344.40px;top:493.00px;font-size:15px;color:#495057;font-weight:700;letter-spacing:-0.127px;">Pending operations</span>
<span class="t" style="left:441.20px;top:543.00px;font-size:15px;color:#495057;letter-spacing:-0.270px;">test</span>
<span class="t" style="left:603.30px;top:543.00px;font-size:15px;color:#495057;letter-spacing:-0.130px;">password: 5ecr3t</span>
<span class="t" style="left:603.30px;top:567.00px;font-size:15px;color:#495057;letter-spacing:-0.127px;">username: test</span>
<span class="t" style="left:441.20px;top:616.00px;font-size:15px;color:#495057;letter-spacing:-0.094px;">test1</span>
<span class="t" style="left:603.30px;top:616.00px;font-size:15px;color:#495057;letter-spacing:-0.130px;">password: 5ecr3t</span>
<span class="t" style="left:603.30px;top:640.00px;font-size:15px;color:#495057;letter-spacing:-0.101px;">username: test1</span>
<span class="t" style="left:441.20px;top:689.00px;font-size:15px;color:#495057;letter-spacing:-0.094px;">test2</span>
<span class="t" style="left:603.30px;top:689.00px;font-size:15px;color:#495057;letter-spacing:-0.130px;">password: 5ecr3t</span>
<span class="t" style="left:603.30px;top:713.00px;font-size:15px;color:#495057;letter-spacing:-0.101px;">username: test2</span>
<span class="t" style="left:388.30px;top:766.00px;font-size:12.5px;color:#fff;letter-spacing:0.021px;">Reclassify</span>
<span class="t" style="left:922.90px;top:765.00px;font-size:15px;color:#495057;letter-spacing:-0.296px;">Rows per page</span>
<span class="t" style="left:1041.80px;top:767.00px;font-size:12.5px;color:#495057;letter-spacing:-0.952px;">20</span>
<span class="t" style="left:1111.50px;top:766.00px;font-size:15.5px;color:#495057;letter-spacing:-0.199px;">Displaying 1 to 20, unknown number of matching results.</span>
<span class="t" style="left:1522.20px;top:765.00px;font-size:13px;color:#6c757d;"><<</span>
<span class="t" style="left:1553.40px;top:765.00px;font-size:13px;color:#6c757d;"><</span>
<span class="t" style="left:1577.00px;top:765.00px;font-size:13px;color:#fff;">1</span>
<span class="t" style="left:1601.70px;top:765.00px;font-size:13px;color:#3c8dbc;">2</span>
<span class="t" style="left:1625.30px;top:765.00px;font-size:13px;color:#3c8dbc;">3</span>
<span class="t" style="left:1649.20px;top:765.00px;font-size:13px;color:#3c8dbc;">4</span>
<span class="t" style="left:1673.00px;top:765.00px;font-size:13px;color:#3c8dbc;">5</span>
<span class="t" style="left:1696.90px;top:765.00px;font-size:13px;color:#3c8dbc;">></span>
<span class="t" style="left:1721.00px;top:765.00px;font-size:13px;color:#3c8dbc;">>></span>
<span class="t" style="left:1046.00px;top:891.00px;font-size:15px;color:#3c8dbc;letter-spacing:-0.549px;">Back</span>
<span class="t" style="left:36.75px;top:5.00px;font-size:37.5px;color:#fff;font-weight:700;color:transparent;background:repeating-linear-gradient(135deg,#ffffff 0px,#ffffff 3.2px,#d0e1ec 3.6px,#ffffff 4.2px);-webkit-background-clip:text;background-clip:text;-webkit-text-stroke:0.7px #f2f7fa;">m</span>
<span class="t" style="left:72.55px;top:5.00px;font-size:37.5px;color:#fff;font-weight:700;color:transparent;background:repeating-linear-gradient(135deg,#ffffff 0px,#ffffff 3.2px,#d0e1ec 3.6px,#ffffff 4.2px);-webkit-background-clip:text;background-clip:text;-webkit-text-stroke:0.7px #f2f7fa;">i</span>
<span class="t" style="left:83.90px;top:5.00px;font-size:37.5px;color:#fff;font-weight:700;color:transparent;background:repeating-linear-gradient(135deg,#ffffff 0px,#ffffff 3.2px,#d0e1ec 3.6px,#ffffff 4.2px);-webkit-background-clip:text;background-clip:text;-webkit-text-stroke:0.7px #f2f7fa;">d</span>
<span class="t" style="left:107.45px;top:5.00px;font-size:37.5px;color:#fff;font-weight:700;color:transparent;background:repeating-linear-gradient(135deg,#ffffff 0px,#ffffff 3.2px,#d0e1ec 3.6px,#ffffff 4.2px);-webkit-background-clip:text;background-clip:text;-webkit-text-stroke:0.7px #f2f7fa;">P</span>
<span class="t" style="left:157.55px;top:5.00px;font-size:37.5px;color:#fff;font-weight:700;color:transparent;background:repeating-linear-gradient(135deg,#ffffff 0px,#ffffff 3.2px,#d0e1ec 3.6px,#ffffff 4.2px);-webkit-background-clip:text;background-clip:text;-webkit-text-stroke:0.7px #f2f7fa;">i</span>
<span class="t" style="left:168.35px;top:5.00px;font-size:37.5px;color:#fff;font-weight:700;color:transparent;background:repeating-linear-gradient(135deg,#ffffff 0px,#ffffff 3.2px,#d0e1ec 3.6px,#ffffff 4.2px);-webkit-background-clip:text;background-clip:text;-webkit-text-stroke:0.7px #f2f7fa;">n</span>
<span class="t" style="left:193.20px;top:5.00px;font-size:37.5px;color:#fff;font-weight:700;color:transparent;background:repeating-linear-gradient(135deg,#ffffff 0px,#ffffff 3.2px,#d0e1ec 3.6px,#ffffff 4.2px);-webkit-background-clip:text;background-clip:text;-webkit-text-stroke:0.7px #f2f7fa;">t</span></body></html>
